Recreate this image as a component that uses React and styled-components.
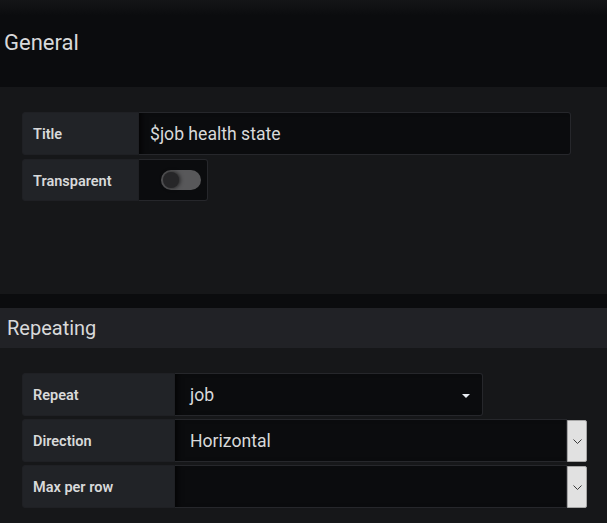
import React from "react";
import styled, { createGlobalStyle } from "styled-components";

const GlobalStyle = createGlobalStyle`
  html, body {
    margin: 0;
    padding: 0;
    background: #161719;
  }
  body {
    font-family: Roboto, "Liberation Sans", sans-serif;
    color: #d8d9da;
  }
`;

const Page = styled.div`
  width: 607px;
  height: 523px;
  overflow: hidden;
  background: #161719;
`;

const PageHeader = styled.div`
  height: 87px;
  display: flex;
  align-items: center;
  padding-left: 4px;
  padding-bottom: 3px;
  box-sizing: border-box;
  background: linear-gradient(180deg, #141517 0px, #0b0c0e 16px, #0b0c0e 100%);
  font-size: 22px;
  color: #d8d9da;
`;

const Section = styled.div`
  height: ${({ height }) => height}px;
  box-sizing: border-box;
  padding: 25px 0 0 22px;
  display: flex;
  flex-direction: column;
  gap: ${({ gap }) => gap}px;
`;

const Band = styled.div`
  height: 14px;
  background: #0b0c0e;
`;

const SectionHeader = styled.div`
  height: 40px;
  display: flex;
  align-items: center;
  padding-left: 7px;
  background: #212226;
  font-size: 20px;
  color: #d8d9da;
`;

const Row = styled.div`
  display: flex;
  height: ${({ height }) => height || 43}px;
`;

const Label = styled.div`
  width: ${({ width }) => width}px;
  flex: none;
  box-sizing: border-box;
  display: flex;
  align-items: center;
  padding: 2px 0 0 10px;
  background: #212327;
  border: 1px solid #1f2024;
  border-radius: 3px 0 0 3px;
  font-size: 14.5px;
  font-weight: 600;
  color: #d8d9da;
`;

const Field = styled.div`
  width: ${({ width }) => width}px;
  flex: none;
  box-sizing: border-box;
  display: flex;
  align-items: center;
  padding-left: ${({ pad }) => pad || 11}px;
  padding-right: 12px;
  padding-top: 1px;
  background: #0b0c0e;
  border: 1px solid #26272b;
  border-left: none;
  border-radius: ${({ square }) => (square ? "0" : "0 3px 3px 0")};
  box-shadow: inset 6px 0 6px -4px rgba(0, 0, 0, 0.8);
  font-size: 17.6px;
  color: #d8d9da;
`;

const Value = styled.span`
  flex: 1;
`;

const Caret = styled.span`
  width: 0;
  height: 0;
  border-left: 4px solid transparent;
  border-right: 4px solid transparent;
  border-top: 4px solid #e9edf2;
  margin-top: 1px;
`;

const SwitchCell = styled.div`
  width: 69px;
  flex: none;
  box-sizing: border-box;
  display: flex;
  align-items: center;
  justify-content: flex-end;
  padding-right: 6px;
  background: #0b0c0e;
  border: 1px solid #26272b;
  border-left: none;
  border-radius: 0 3px 3px 0;
`;

const Track = styled.div`
  width: 40px;
  height: 20px;
  border-radius: 10px;
  background: #58585a;
  display: flex;
  align-items: center;
  padding-left: 2px;
  box-sizing: border-box;
`;

const Knob = styled.div`
  width: 16px;
  height: 16px;
  border-radius: 50%;
  background: #262628;
  box-shadow: 1px 0 4px rgba(0, 0, 0, 0.7);
`;

const SpinButton = styled.div`
  width: 20px;
  flex: none;
  box-sizing: border-box;
  margin-top: 1px;
  display: flex;
  align-items: center;
  justify-content: center;
  background: #e1e1e1;
  border: 1px solid #a7a7a7;
  border-radius: 0 2px 2px 0;
`;

const Chevron = () => (
  <svg width="9" height="5" viewBox="0 0 9 5">
    <path d="M0.5 0.5 L4.5 4.5 L8.5 0.5" fill="none" stroke="#3a3a3a" strokeWidth="1" />
  </svg>
);

export default function App() {
  return (
    <Page>
      <GlobalStyle />
      <PageHeader>General</PageHeader>
      <Section height={207} gap={4}>
        <Row>
          <Label width={117}>Title</Label>
          <Field width={432}>$job health state</Field>
        </Row>
        <Row height={42}>
          <Label width={117}>Transparent</Label>
          <SwitchCell>
            <Track>
              <Knob />
            </Track>
          </SwitchCell>
        </Row>
      </Section>
      <Band />
      <SectionHeader>Repeating</SectionHeader>
      <Section height={175} gap={3}>
        <Row>
          <Label width={153}>Repeat</Label>
          <Field width={308} pad={15}>
            <Value>job</Value>
            <Caret />
          </Field>
        </Row>
        <Row>
          <Label width={153}>Direction</Label>
          <Field width={392} pad={15} square>
            <Value>Horizontal</Value>
          </Field>
          <SpinButton>
            <Chevron />
          </SpinButton>
        </Row>
        <Row>
          <Label width={153}>Max per row</Label>
          <Field width={392} pad={15} square>
            <Value />
          </Field>
          <SpinButton>
            <Chevron />
          </SpinButton>
        </Row>
      </Section>
    </Page>
  );
}
